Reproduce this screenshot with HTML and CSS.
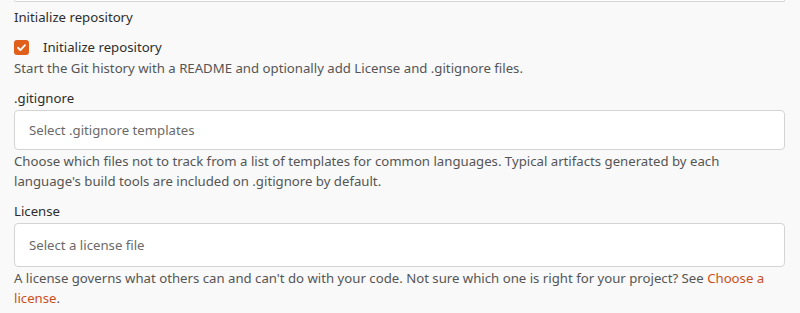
FILE: index.html
```html
<!DOCTYPE html>
<html lang="en">
<head>
  <meta charset="UTF-8">
  <meta name="viewport" content="width=device-width, initial-scale=1.0">
  <title>New Repository</title>
  <link rel="stylesheet" href="styles.css">
</head>
<body>
  <div class="form">
    <div class="field-cut"></div>

    <div class="field">
      <label class="label">Initialize repository</label>
      <label class="check">
        <span class="box">
          <svg width="11" height="11" viewBox="0 0 12 12"><path d="M2.2 6.3 4.8 8.8 9.8 3.4" fill="none" stroke="#fff" stroke-width="2" stroke-linecap="round" stroke-linejoin="round"/></svg>
        </span>
        Initialize repository
      </label>
      <p class="help">Start the Git history with a README and optionally add License and .gitignore files.</p>
    </div>

    <div class="field">
      <label class="label">.gitignore</label>
      <div class="select">Select .gitignore templates</div>
      <p class="help">Choose which files not to track from a list of templates for common languages. Typical artifacts generated by each language's build tools are included on .gitignore by default.</p>
    </div>

    <div class="field">
      <label class="label">License</label>
      <div class="select tall">Select a license file</div>
      <p class="help">A license governs what others can and can't do with your code. Not sure which one is right for your project? See <a href="#">Choose a license</a>.</p>
    </div>
  </div>
</body>
</html>
```

FILE: styles.css
```css
body {
  margin: 0;
  background-color: #f9f9f9;
  color: #303030;
  font-family: "Noto Sans", "Open Sans", sans-serif;
  font-size: 13.2px;
  line-height: 20px;
}
.form {
  padding: 0 15px 0 14px;
}
.field-cut {
  height: 1px;
  background: #fff;
  border: 1px solid #d4d4d4;
  border-top: 0;
  border-radius: 0 0 4px 4px;
}
.field {
  margin-top: 5px;
}
.field + .field {
  margin-top: 10px;
}
.label {
  display: block;
  color: #2d2d2d;
}
.check {
  display: flex;
  align-items: center;
  margin-top: 10px;
  color: #2d2d2d;
}
.box {
  display: flex;
  align-items: center;
  justify-content: center;
  width: 15px;
  height: 15px;
  margin-right: 14px;
  background-color: #e0601b;
  border-radius: 3px;
}
.select {
  box-sizing: border-box;
  height: 40px;
  margin-top: 2px;
  padding: 0 14px;
  display: flex;
  align-items: center;
  background: #fff;
  border: 1px solid #d4d4d4;
  border-radius: 4px;
  color: #6a6a6a;
}
.select.tall {
  height: 44px;
  margin-top: 2px;
}
.help {
  margin: 1px 0 0;
  color: #555;
}
.help a {
  color: #c9501c;
  text-decoration: none;
}
```
